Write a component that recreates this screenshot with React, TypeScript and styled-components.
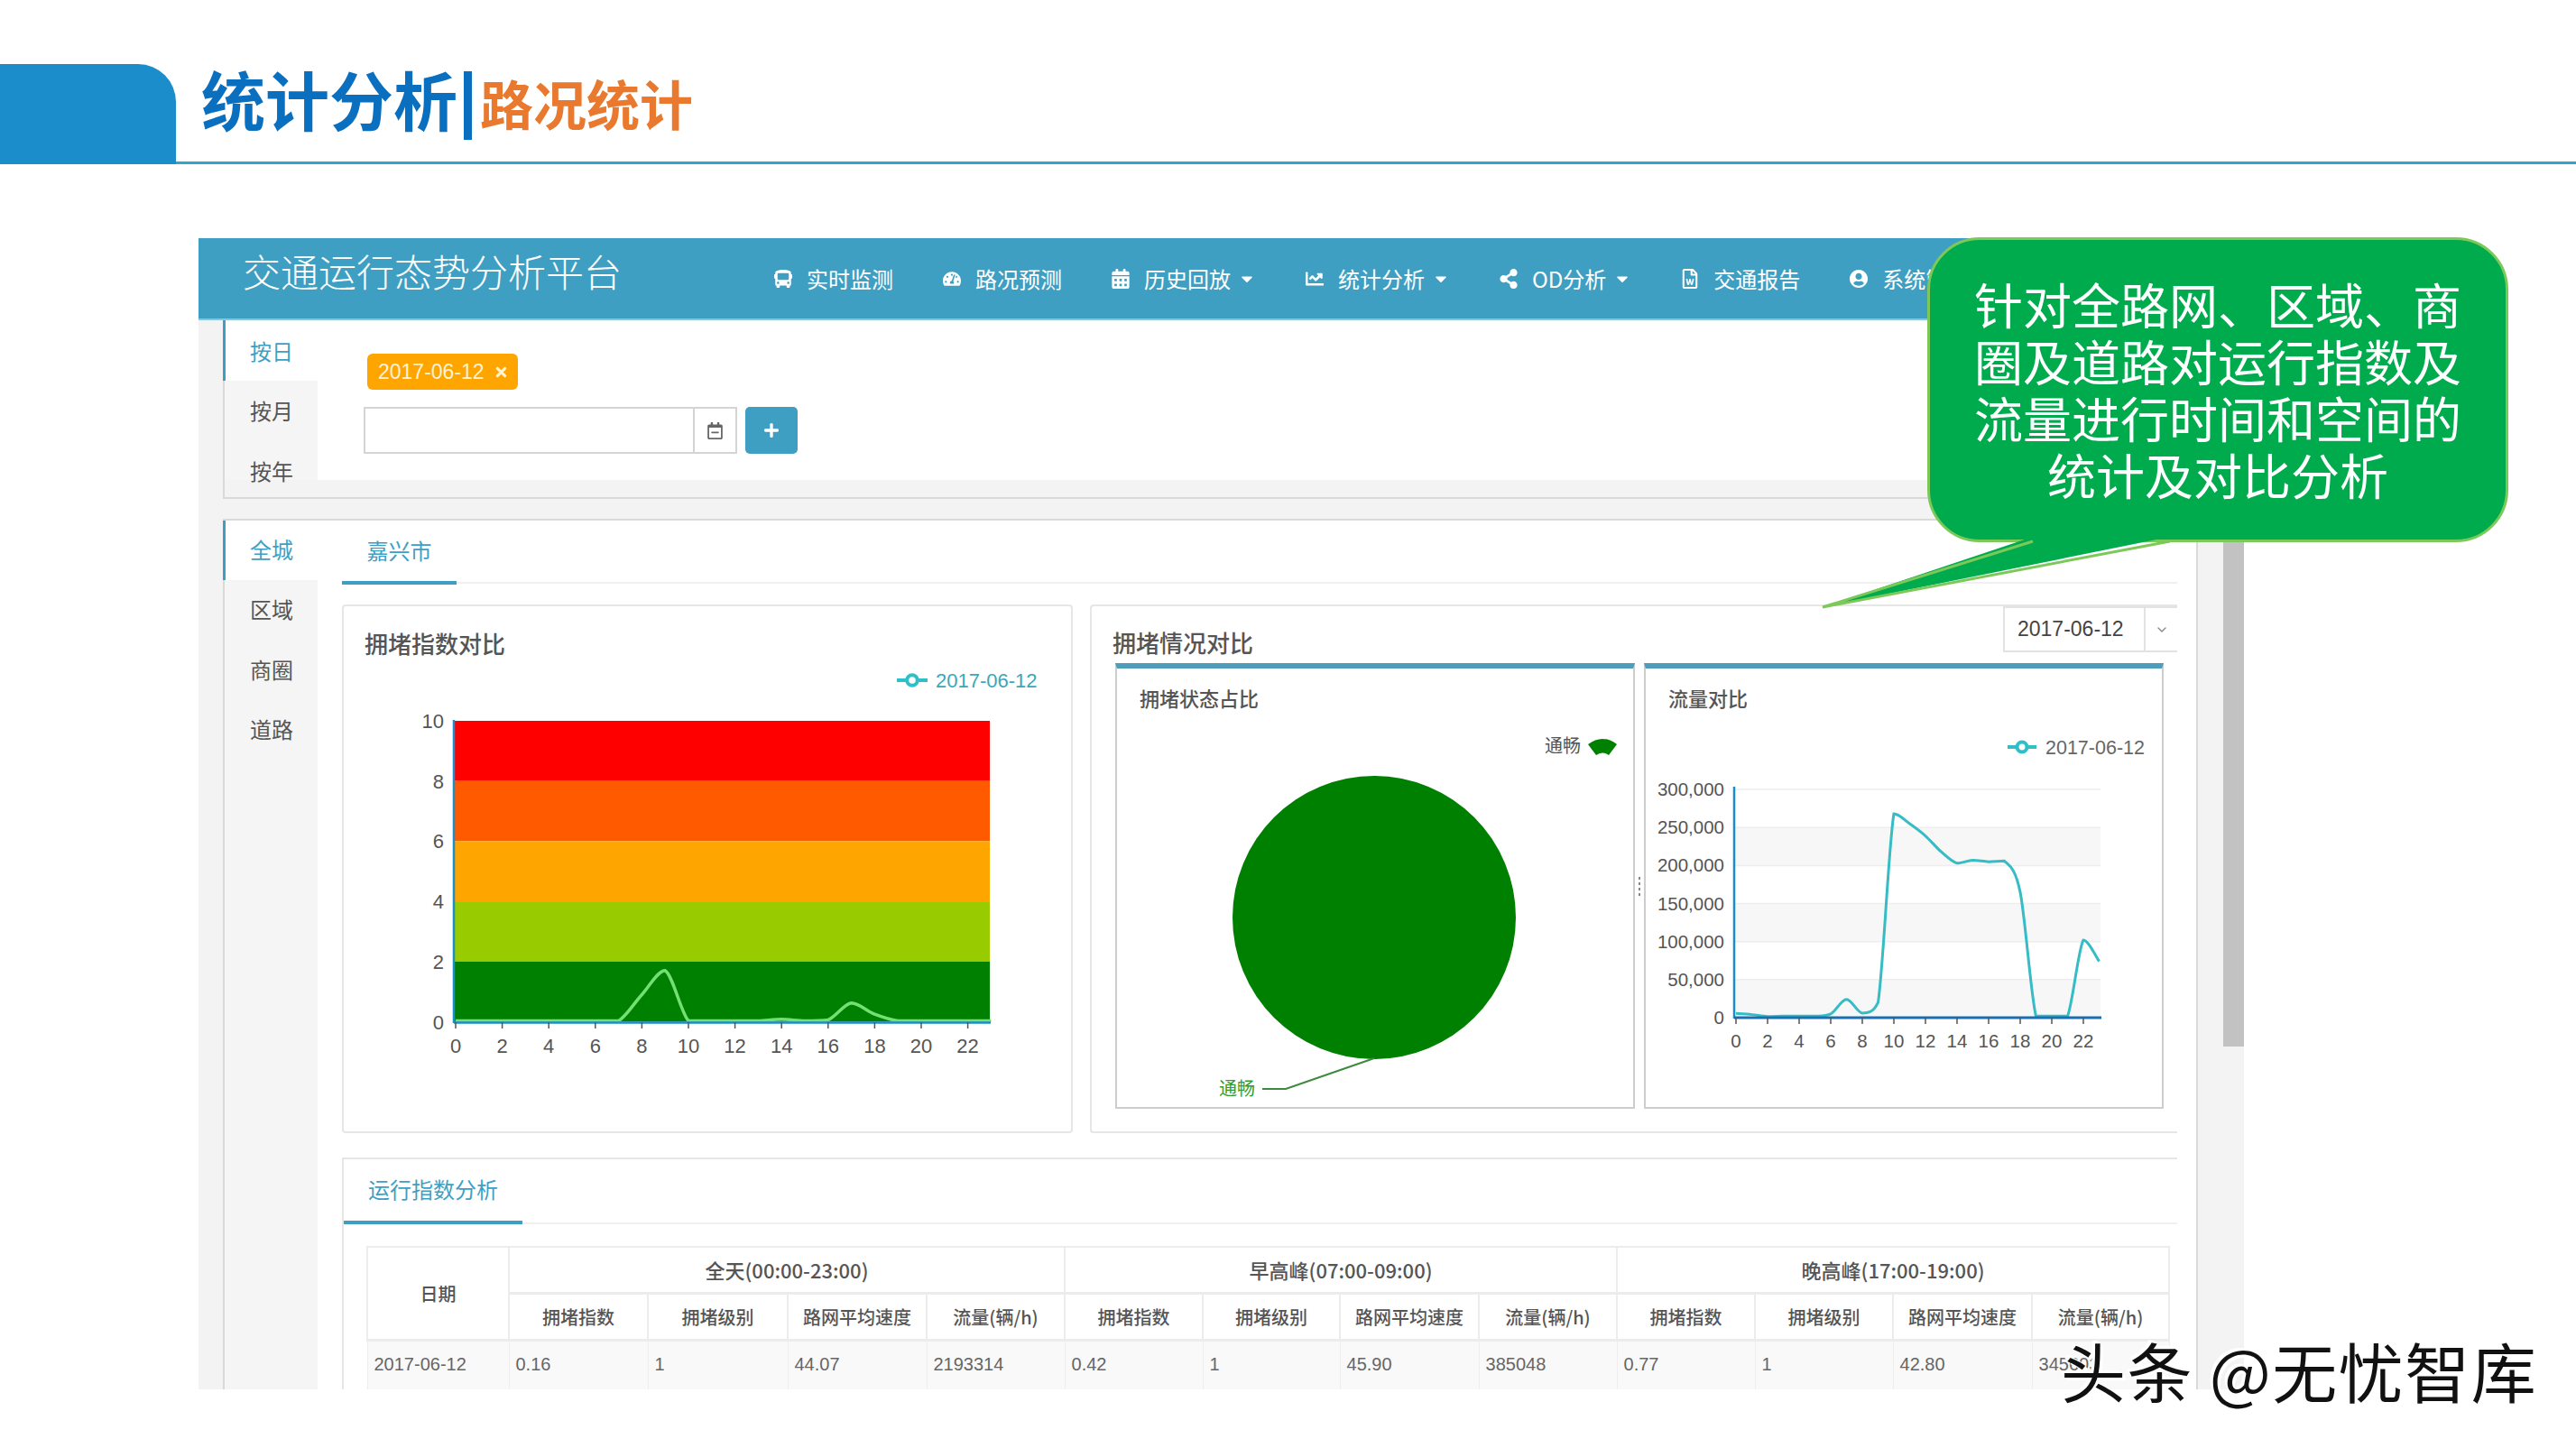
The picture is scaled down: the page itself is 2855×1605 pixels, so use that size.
import styled, { createGlobalStyle } from 'styled-components';
import {
  FaBus,
  FaCalendarAlt,
  FaCaretDown,
  FaChartLine,
  FaPlus,
  FaRegCalendarMinus,
  FaRegFileWord,
  FaShareAlt,
  FaTachometerAlt,
  FaTimes,
  FaUserCircle,
} from 'react-icons/fa';
import { ChevronDown } from 'lucide-react';

const GlobalStyle = createGlobalStyle`
  html, body {
    margin: 0;
    background: #fff;
    font-family: "Liberation Sans", "Noto Sans CJK SC", sans-serif;
    color: #555;
  }
  * { box-sizing: border-box; }
  svg text { font-family: "Liberation Sans", "Noto Sans CJK SC", sans-serif; }
`;

const Page = styled.div`
  position: relative;
  width: 2855px;
  height: 1605px;
  overflow: hidden;
  background: #fff;
`;

const SlideHeader = styled.header`
  display: flex;
  height: 182px;
  border-bottom: 3px solid #2ea6cf;
`;

const HeaderTab = styled.div`
  width: 195px;
  height: 111px;
  margin-top: 71px;
  background: #1a8dca;
  border-radius: 0 42px 0 0;
`;

const SlideTitle = styled.div`
  display: flex;
  align-items: center;
  margin: 72px 0 0 28px;
  height: 84px;
  font-family: "Noto Sans CJK SC", sans-serif;
  font-weight: 700;
`;

const TitleMain = styled.span`
  font-size: 71px;
  line-height: 84px;
  margin-top: -12px;
  color: #0b6fc0;
`;

const TitleBar = styled.span`
  width: 9px;
  height: 76px;
  margin: 6px 9px 0 7px;
  background: #0b6fc0;
`;

const TitleSub = styled.span`
  font-size: 59px;
  line-height: 84px;
  margin-top: 0;
  color: #e8792e;
`;

const Dashboard = styled.section`
  display: grid;
  grid-template-rows: 91px 1fr;
  width: 2267px;
  height: 1276px;
  margin: 82px 0 0 220px;
  overflow: hidden;
  background: #f3f3f3;
`;

const NavBar = styled.nav`
  display: flex;
  align-items: center;
  background: #3f9fc3;
  color: #fff;
  font-family: "Noto Sans CJK SC", sans-serif;
  border-bottom: 2px solid #8cc3dc;
`;

const Brand = styled.div`
  width: 588px;
  padding: 0 0 18px 49px;
  font-size: 42px;
  font-weight: 300;
  white-space: nowrap;
`;

const NavList = styled.div`
  display: flex;
  align-items: center;
  gap: 55px;
  padding-left: 50px;
  white-space: nowrap;
`;

const NavEntry = styled.div`
  display: flex;
  align-items: center;
  font-size: 24px;
  line-height: 30px;
`;

const NavIcon = styled.span`
  display: flex;
  justify-content: center;
  width: 20px;
  margin-right: 16px;
  font-size: 22px;
`;

const Caret = styled(FaCaretDown)`
  margin-left: 8px;
  width: 20px;
  height: 20px;
`;

const DashBody = styled.div`
  display: flex;
  min-height: 0;
  padding-left: 27px;
`;

const MainColumn = styled.div`
  display: flex;
  flex-direction: column;
  width: 2189px;
  min-height: 0;
`;

const Gutter = styled.div`
  width: 28px;
`;

const ScrollTrack = styled.div`
  width: 23px;
`;

const ScrollThumb = styled.div`
  height: 805px;
  background: #c2c2c2;
`;

const FilterSection = styled.div`
  display: flex;
  flex: none;
  height: 198px;
  padding-bottom: 19px;
  border-left: 2px solid #d9d9d9;
  border-bottom: 2px solid #d9d9d9;
`;

const SideList = styled.div`
  flex: none;
  width: 103px;
  background: #f5f5f5;
`;

const SideTab = styled.div<{ $active?: boolean }>`
  display: flex;
  align-items: center;
  height: 66.5px;
  padding: 0 0 0 ${(p) => (p.$active ? 27 : 28)}px;
  font-family: "Noto Sans CJK SC", sans-serif;
  font-size: 24px;
  color: ${(p) => (p.$active ? '#3f9fc3' : '#555')};
  background: ${(p) => (p.$active ? '#fff' : 'transparent')};
  margin-left: ${(p) => (p.$active ? -2 : 0)}px;
  border-left: ${(p) => (p.$active ? '3px solid #3f9fc3' : 'none')};
`;

const ContentSide = styled(SideList)`
  ${SideTab} {
    height: 66.3px;
    padding-bottom: 3px;
  }
`;

const FilterBody = styled.div`
  flex: 1;
  padding: 37px 0 0 51px;
  background: #fff;
`;

const DateTag = styled.div`
  display: flex;
  align-items: center;
  width: 167px;
  height: 40px;
  margin-left: 4px;
  padding-left: 12px;
  border-radius: 6px;
  background: #ffa500;
  color: #fff3d6;
  font-size: 23px;
  svg {
    width: 17px;
    height: 17px;
    margin-left: 10px;
  }
`;

const DateRow = styled.div`
  display: flex;
  margin-top: 19px;
  gap: 9px;
`;

const DateInput = styled.div`
  display: flex;
  justify-content: flex-end;
  width: 414px;
  height: 52px;
  border: 2px solid #d4d4d4;
`;

const CalendarAddon = styled.div`
  display: flex;
  align-items: center;
  justify-content: center;
  width: 47px;
  border-left: 2px solid #d4d4d4;
  color: #666;
  font-size: 19px;
`;

const AddButton = styled.div`
  display: flex;
  align-items: center;
  justify-content: center;
  width: 58px;
  height: 52px;
  border-radius: 5px;
  background: #3f9fc3;
  color: #fff;
  font-size: 18px;
`;

const ContentSection = styled.div`
  display: flex;
  flex: 1;
  min-height: 0;
  margin-top: 22px;
  border-top: 2px solid #d9d9d9;
  border-left: 2px solid #d9d9d9;
  border-right: 2px solid #d9d9d9;
`;

const ContentMain = styled.div`
  flex: 1;
  min-width: 0;
  padding: 0 21px 0 27px;
  background: #fff;
`;

const CityTabs = styled.div`
  height: 70px;
  border-bottom: 2px solid #f0f0f0;
`;

const TabLabel = styled.div<{ $w: number; $h: number }>`
  display: flex;
  align-items: center;
  justify-content: center;
  width: ${(p) => p.$w}px;
  height: ${(p) => p.$h}px;
  padding-bottom: 3px;
  border-bottom: 4px solid #3f9fc3;
  font-family: "Noto Sans CJK SC", sans-serif;
  font-size: 24px;
  color: #3f9fc3;
`;

const CardRow = styled.div`
  display: flex;
  gap: 19px;
  margin-top: 23px;
  height: 586px;
`;

const Card = styled.div`
  border: 2px solid #e6e6e6;
  border-radius: 4px;
`;

const IndexCard = styled(Card)`
  width: 810px;
  padding-top: 26px;
`;

const CompareCard = styled(Card)`
  width: 1207px;
  border-right: none;
  border-radius: 4px 0 0 4px;
`;

const CardTitle = styled.h3`
  margin: 0;
  padding-left: 23px;
  font-family: "Noto Sans CJK SC", sans-serif;
  font-size: 26px;
  font-weight: 500;
  line-height: 30px;
  color: #555;
`;

const CompareHead = styled.div`
  display: flex;
  justify-content: space-between;
  height: 63px;
  padding-top: 25px;
`;

const CompareSelect = styled.div`
  display: flex;
  width: 193px;
  height: 51px;
  margin-top: -25px;
  border: 2px solid #e2e2e2;
  border-right: none;
  font-size: 23px;
  color: #444;
`;

const SelectValue = styled.div`
  display: flex;
  align-items: center;
  width: 156px;
  padding-left: 14px;
  border-right: 2px solid #e2e2e2;
`;

const SelectArrow = styled.div`
  display: flex;
  flex: 1;
  align-items: center;
  justify-content: center;
  color: #888;
`;

const SubRow = styled.div`
  display: flex;
  height: 494px;
  margin-left: 26px;
`;

const SubCard = styled.div`
  width: 576px;
  border: 2px solid #cdcdcd;
  border-top: 6px solid #4e9dbb;
`;

const SubTitle = styled.div`
  height: 54px;
  padding: 18px 0 0 25px;
  font-family: "Noto Sans CJK SC", sans-serif;
  font-size: 22px;
  font-weight: 500;
  line-height: 28px;
  color: #555;
`;

const Splitter = styled.div`
  display: flex;
  flex-direction: column;
  justify-content: center;
  align-items: center;
  gap: 3px;
  width: 10px;
`;

const SplitterDot = styled.i`
  width: 2px;
  height: 3px;
  background: #888;
`;

const ChartSvg = styled.svg`
  display: block;
`;

const IndexSvg = styled(ChartSvg)`
  margin-top: 7px;
`;

const AnalysisCard = styled.div`
  margin-top: 27px;
  border-top: 2px solid #e6e6e6;
  border-left: 2px solid #e6e6e6;
`;

const AnalysisTabs = styled.div`
  height: 72px;
  border-bottom: 2px solid #f0f0f0;
`;

const TableWrap = styled.div`
  padding: 24px 12px 0 25px;
`;

const Table = styled.table`
  width: 1997px;
  table-layout: fixed;
  border-collapse: collapse;
`;

const HeadCell = styled.th<{ $h?: number; $size?: number }>`
  height: ${(p) => p.$h ?? 51}px;
  padding: 0;
  border: 2px solid #ececec;
  border-bottom-width: 3px;
  font-family: "Noto Sans CJK SC", sans-serif;
  font-size: ${(p) => p.$size ?? 20}px;
  font-weight: 500;
  color: #555;
`;

const DataCell = styled.td`
  height: 62px;
  padding: 0 0 8px 7px;
  border: 1px solid #eee;
  background: #f9f9f9;
  font-size: 20px;
  color: #666;
`;

const Bubble = styled.div`
  position: absolute;
  left: 2136px;
  top: 263px;
  width: 644px;
  height: 338px;
  padding: 39px 0 0;
  background: #00ab4e;
  border: 3px solid #7cc95a;
  border-radius: 58px;
  color: #fff;
  font-family: "Noto Sans CJK SC", sans-serif;
  font-size: 54px;
  line-height: 63px;
  text-align: center;
`;

const BubbleText = styled.div`
  width: 548px;
  margin: 0 auto;
`;

const BubbleTail = styled.svg`
  position: absolute;
  left: -124px;
  top: 329px;
`;

const Watermark = styled.div`
  position: absolute;
  left: 2284px;
  top: 1468px;
  font-family: "Noto Sans CJK SC", sans-serif;
  font-size: 72px;
  line-height: 100px;
  letter-spacing: 1.5px;
  color: #111;
  white-space: nowrap;
  text-shadow: 3px 3px 0 #fff, -3px -3px 0 #fff;
`;

const tickColor = '#555';

const clamp = (v: number, a: number, b: number) => Math.min(Math.max(v, Math.min(a, b)), Math.max(a, b));

// catmull-rom through the points, control y kept inside each segment so it doesn't overshoot
const smooth = (pts: number[][]) => {
  let d = `M${pts[0][0]} ${pts[0][1]}`;
  for (let i = 0; i < pts.length - 1; i++) {
    const p0 = pts[Math.max(i - 1, 0)];
    const p1 = pts[i];
    const p2 = pts[i + 1];
    const p3 = pts[Math.min(i + 2, pts.length - 1)];
    const k = 0.16;
    const c1y = clamp(p1[1] + (p2[1] - p0[1]) * k, p1[1], p2[1]);
    const c2y = clamp(p2[1] - (p3[1] - p1[1]) * k, p1[1], p2[1]);
    d += ` C${p1[0] + (p2[0] - p0[0]) * k} ${c1y} ${p2[0] - (p3[0] - p1[0]) * k} ${c2y} ${p2[0]} ${p2[1]}`;
  }
  return d;
};

const hours = Array.from({ length: 12 }, (_, i) => i * 2);

const indexData = [
  0.03, 0.03, 0.03, 0.03, 0.03, 0.03, 0.03, 0.03, 0.9, 1.7, 0.03, 0.03, 0.03, 0.03, 0.08, 0.03, 0.06, 0.62, 0.25,
  0.03, 0.03, 0.03, 0.03, 0.03,
];

const flowData = [
  5500, 4000, 1500, 2000, 2000, 2000, 5000, 24000, 6000, 20000, 268000, 255000, 239000, 218000, 203000, 207000,
  205000, 206000, 165000, 2000, 2000, 2000, 102000, 74000,
];

const bands = [
  { from: 10, to: 8, color: '#ff0000' },
  { from: 8, to: 6, color: '#ff5a00' },
  { from: 6, to: 4, color: '#ffa500' },
  { from: 4, to: 2, color: '#99cc00' },
  { from: 2, to: 0, color: '#008000' },
];

const LegendMark = ({ x, y, w }: { x: number; y: number; w: number }) => (
  <g fill="none" stroke="#2fbfc9" strokeWidth="4">
    <line x1={x} x2={x + w} y1={y} y2={y} />
    <circle cx={x + w / 2} cy={y} r={w * 0.17} fill="#fff" />
  </g>
);

const IndexChart = () => {
  const X = (h: number) => 505 + h * 25.8;
  const Y = (v: number) => 1132.5 - v * 33.35;
  return (
    <IndexSvg width={806} height={450} viewBox="381 735 806 450">
      <LegendMark x={994} y={754} w={34} />
      <text x={1037} y={762} fontSize={22} fill="#3aa8b8">
        2017-06-12
      </text>
      {bands.map((b) => (
        <rect key={b.from} x={504} y={Y(b.from)} width={593} height={Y(b.to) - Y(b.from)} fill={b.color} />
      ))}
      <path d={smooth(indexData.map((v, h) => [X(h), Y(v)]))} fill="none" stroke="#74e074" strokeWidth="3.5" />
      <line x1={503} x2={503} y1={798} y2={1134} stroke="#1a8dca" strokeWidth="2.5" />
      <line x1={503} x2={1098} y1={1133.5} y2={1133.5} stroke="#1a8dca" strokeWidth="2.5" />
      {[0, 2, 4, 6, 8, 10].map((v) => (
        <text key={v} x={492} y={Y(v) + 8} fontSize={22} fill={tickColor} textAnchor="end">
          {v}
        </text>
      ))}
      {hours.map((h) => (
        <g key={h}>
          <line x1={X(h)} x2={X(h)} y1={1133} y2={1140} stroke="#555" strokeWidth="1.5" />
          <text x={X(h)} y={1167} fontSize={22} fill={tickColor} textAnchor="middle">
            {h}
          </text>
        </g>
      ))}
    </IndexSvg>
  );
};

const PieChart = () => (
  <ChartSvg width={572} height={432} viewBox="1238 795 572 432">
    <text x={1712} y={834} fontSize={20} fill="#555" fontFamily="Noto Sans CJK SC">
      通畅
    </text>
    <path d="M1760 825 Q1776 813 1792 825 L1783 837 Q1776 832 1769 837 Z" fill="#008000" />
    <circle cx={1523} cy={1017} r={157} fill="#008000" />
    <path d="M1523 1173 L1425 1207 L1399 1207" fill="none" stroke="#3d8a3d" strokeWidth="2" />
    <text x={1351} y={1214} fontSize={20} fill="#2e9e2e">
      通畅
    </text>
  </ChartSvg>
);

const FlowChart = () => {
  const X = (h: number) => 1924 + h * 17.5;
  const Y = (v: number) => 1128 - v * 0.000843;
  const ticks = [0, 50000, 100000, 150000, 200000, 250000, 300000];
  return (
    <ChartSvg width={572} height={432} viewBox="1824 795 572 432">
      <LegendMark x={2225} y={828} w={32} />
      <text x={2267} y={836} fontSize={21.5} fill="#666">
        2017-06-12
      </text>
      {[0, 100000, 200000].map((v) => (
        <rect key={v} x={1923} y={Y(v + 50000)} width={405} height={Y(v) - Y(v + 50000)} fill="#f7f7f7" />
      ))}
      {ticks.map((v) => (
        <g key={v}>
          <line x1={1923} x2={2328} y1={Y(v)} y2={Y(v)} stroke="#eee" strokeWidth="1.5" />
          <text x={1911} y={Y(v) + 7} fontSize={20.5} fill={tickColor} textAnchor="end">
            {v.toLocaleString('en-US')}
          </text>
        </g>
      ))}
      <path d={smooth(flowData.map((v, h) => [X(h), Y(v)]))} fill="none" stroke="#35bcc4" strokeWidth="3" />
      <line x1={1922} x2={1922} y1={872} y2={1129} stroke="#1a8dca" strokeWidth="2.5" />
      <line x1={1922} x2={2329} y1={1128} y2={1128} stroke="#1a6fb0" strokeWidth="3" />
      {hours.map((h) => (
        <g key={h}>
          <line x1={X(h)} x2={X(h)} y1={1128} y2={1135} stroke="#555" strokeWidth="1.5" />
          <text x={X(h)} y={1161} fontSize={20.5} fill={tickColor} textAnchor="middle">
            {h}
          </text>
        </g>
      ))}
    </ChartSvg>
  );
};

const navItems = [
  { icon: <FaBus />, label: '实时监测' },
  { icon: <FaTachometerAlt />, label: '路况预测' },
  { icon: <FaCalendarAlt />, label: '历史回放', caret: true },
  { icon: <FaChartLine />, label: '统计分析', caret: true },
  { icon: <FaShareAlt />, label: 'OD分析', caret: true },
  { icon: <FaRegFileWord />, label: '交通报告' },
  { icon: <FaUserCircle />, label: '系统管理' },
];

const columnWidths = [157, 154, 155, 154, 153, 153, 152, 154, 153, 153, 153, 154, 152];
const metricNames = ['拥堵指数', '拥堵级别', '路网平均速度', '流量(辆/h)'];
const periods = ['全天(00:00-23:00)', '早高峰(07:00-09:00)', '晚高峰(17:00-19:00)'];
const row = ['0.16', '1', '44.07', '2193314', '0.42', '1', '45.90', '385048', '0.77', '1', '42.80', '345603'];

const Col = styled.col<{ $w: number }>`
  width: ${(p) => p.$w}px;
`;

const App = () => (
  <Page>
    <GlobalStyle />
    <SlideHeader>
      <HeaderTab />
      <SlideTitle>
        <TitleMain>统计分析</TitleMain>
        <TitleBar />
        <TitleSub>路况统计</TitleSub>
      </SlideTitle>
    </SlideHeader>

    <Dashboard>
      <NavBar>
        <Brand>交通运行态势分析平台</Brand>
        <NavList>
          {navItems.map((item) => (
            <NavEntry key={item.label}>
              <NavIcon>{item.icon}</NavIcon>
              {item.label}
              {item.caret && <Caret />}
            </NavEntry>
          ))}
        </NavList>
      </NavBar>

      <DashBody>
        <MainColumn>
          <FilterSection>
            <SideList>
              <SideTab $active>按日</SideTab>
              <SideTab>按月</SideTab>
              <SideTab>按年</SideTab>
            </SideList>
            <FilterBody>
              <DateTag>
                2017-06-12
                <FaTimes />
              </DateTag>
              <DateRow>
                <DateInput>
                  <CalendarAddon>
                    <FaRegCalendarMinus />
                  </CalendarAddon>
                </DateInput>
                <AddButton>
                  <FaPlus />
                </AddButton>
              </DateRow>
            </FilterBody>
          </FilterSection>

          <ContentSection>
            <ContentSide>
              <SideTab $active>全城</SideTab>
              <SideTab>区域</SideTab>
              <SideTab>商圈</SideTab>
              <SideTab>道路</SideTab>
            </ContentSide>
            <ContentMain>
              <CityTabs>
                <TabLabel $w={127} $h={71}>
                  嘉兴市
                </TabLabel>
              </CityTabs>

              <CardRow>
                <IndexCard>
                  <CardTitle>拥堵指数对比</CardTitle>
                  <IndexChart />
                </IndexCard>

                <CompareCard>
                  <CompareHead>
                    <CardTitle>拥堵情况对比</CardTitle>
                    <CompareSelect>
                      <SelectValue>2017-06-12</SelectValue>
                      <SelectArrow>
                        <ChevronDown size={16} />
                      </SelectArrow>
                    </CompareSelect>
                  </CompareHead>
                  <SubRow>
                    <SubCard>
                      <SubTitle>拥堵状态占比</SubTitle>
                      <PieChart />
                    </SubCard>
                    <Splitter>
                      <SplitterDot />
                      <SplitterDot />
                      <SplitterDot />
                      <SplitterDot />
                    </Splitter>
                    <SubCard>
                      <SubTitle>流量对比</SubTitle>
                      <FlowChart />
                    </SubCard>
                  </SubRow>
                </CompareCard>
              </CardRow>

              <AnalysisCard>
                <AnalysisTabs>
                  <TabLabel $w={198} $h={72}>
                    运行指数分析
                  </TabLabel>
                </AnalysisTabs>
                <TableWrap>
                  <Table>
                    <colgroup>
                      {columnWidths.map((w, i) => (
                        <Col key={i} $w={w} />
                      ))}
                    </colgroup>
                    <thead>
                      <tr>
                        <HeadCell rowSpan={2}>日期</HeadCell>
                        {periods.map((p) => (
                          <HeadCell key={p} colSpan={4} $size={22}>
                            {p}
                          </HeadCell>
                        ))}
                      </tr>
                      <tr>
                        {periods.flatMap((p) =>
                          metricNames.map((m) => (
                            <HeadCell key={p + m} $h={52}>
                              {m}
                            </HeadCell>
                          )),
                        )}
                      </tr>
                    </thead>
                    <tbody>
                      <tr>
                        <DataCell>2017-06-12</DataCell>
                        {row.map((v, i) => (
                          <DataCell key={i}>{v}</DataCell>
                        ))}
                      </tr>
                    </tbody>
                  </Table>
                </TableWrap>
              </AnalysisCard>
            </ContentMain>
          </ContentSection>
        </MainColumn>
        <Gutter />
        <ScrollTrack>
          <ScrollThumb />
        </ScrollTrack>
      </DashBody>
    </Dashboard>

    <Bubble>
      <BubbleText>针对全路网、区域、商圈及道路对运行指数及流量进行时间和空间的统计及对比分析</BubbleText>
      <BubbleTail width={395} height={82} viewBox="2015 595 395 82">
        <polygon points="2253,595 2405,595 2020,673" fill="#00ab4e" />
        <path d="M2253 600 L2020 673 L2405 600" fill="none" stroke="#7cc95a" strokeWidth="3" />
      </BubbleTail>
    </Bubble>
    <Watermark>头条 @无忧智库</Watermark>
  </Page>
);

export default App;
